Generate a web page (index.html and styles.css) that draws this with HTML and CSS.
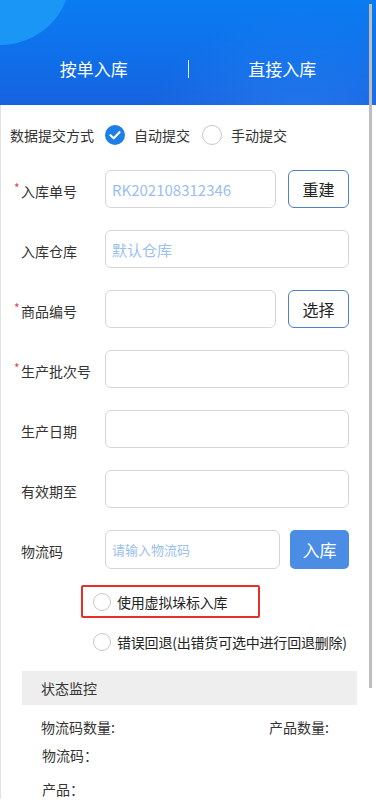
FILE: index.html
```html
<!DOCTYPE html>
<html lang="zh-CN">
<head>
    <meta charset="UTF-8">
    <meta name="viewport" content="width=device-width, initial-scale=1.0">
    <title>入库</title>
    <link rel="stylesheet" href="styles.css">
</head>
<body>
    <div class="header">
        <div class="bubble"></div>
        <div class="wave"></div>
        <div class="tabs">
            <div class="tab">按单入库</div>
            <div class="tab-line"></div>
            <div class="tab">直接入库</div>
        </div>
    </div>

    <div class="page">
        <div class="submit-row">
            <span class="submit-label">数据提交方式</span>
            <span class="radio checked">
                <svg width="20" height="20" viewBox="0 0 20 20">
                    <circle cx="10" cy="10" r="10" fill="#1e7ee8"/>
                    <path d="M5.5 10.2 L8.7 13.2 L14.5 7.2" fill="none" stroke="#fff" stroke-width="2.2" stroke-linecap="round" stroke-linejoin="round"/>
                </svg>
            </span>
            <span class="radio-text">自动提交</span>
            <span class="radio"></span>
            <span class="radio-text">手动提交</span>
        </div>

        <div class="field">
            <label class="label"><i>*</i>入库单号</label>
            <div class="input short"><span class="value">RK202108312346</span></div>
            <button class="btn-outline">重建</button>
        </div>

        <div class="field">
            <label class="label"><i></i>入库仓库</label>
            <div class="input"><span class="value">默认仓库</span></div>
        </div>

        <div class="field">
            <label class="label"><i>*</i>商品编号</label>
            <div class="input short"></div>
            <button class="btn-outline">选择</button>
        </div>

        <div class="field">
            <label class="label"><i>*</i>生产批次号</label>
            <div class="input"></div>
        </div>

        <div class="field">
            <label class="label"><i></i>生产日期</label>
            <div class="input"></div>
        </div>

        <div class="field">
            <label class="label"><i></i>有效期至</label>
            <div class="input"></div>
        </div>

        <div class="field code-field">
            <label class="label"><i></i>物流码</label>
            <div class="input short"><span class="placeholder">请输入物流码</span></div>
            <button class="btn-primary">入库</button>
        </div>

        <div class="option highlight">
            <span class="radio"></span>
            <span class="option-text">使用虚拟垛标入库</span>
        </div>

        <div class="option">
            <span class="radio"></span>
            <span class="option-text">错误回退(出错货可选中进行回退删除)</span>
        </div>

        <div class="monitor">
            <div class="monitor-title">状态监控</div>
            <div class="monitor-counts">
                <span>物流码数量:</span>
                <span>产品数量:</span>
            </div>
            <div class="monitor-line">物流码：</div>
            <div class="monitor-line last">产品：</div>
        </div>
    </div>

    <div class="scrollbar"></div>
</body>
</html>
```

FILE: styles.css
```css
body {
    margin: 0;
    padding: 0;
    font-family: "Noto Sans CJK SC", "Liberation Sans", sans-serif;
    color: #333;
    background: #fff;
    overflow: hidden;
}

.header {
    position: relative;
    height: 105px;
    overflow: hidden;
    background: linear-gradient(180deg, #0b7cf2 0%, #0f6fe9 55%, #1763df 100%);
}

.bubble {
    position: absolute;
    left: -70px;
    top: -90px;
    width: 140px;
    height: 135px;
    border-radius: 50%;
    background: #1a97f6;
}

.wave {
    position: absolute;
    left: 150px;
    top: 10px;
    width: 300px;
    height: 220px;
    border-radius: 50%;
    background: radial-gradient(ellipse at center, rgba(60, 150, 255, 0.35) 0%, rgba(60, 150, 255, 0) 70%);
}

.tabs {
    position: relative;
    display: flex;
    align-items: center;
    padding-top: 57px;
}

.tab {
    flex: 1;
    text-align: center;
    color: #fff;
    font-size: 17px;
    line-height: 24px;
}

.tab-line {
    width: 1px;
    height: 18px;
    background: #e8f1ff;
}

.page {
    border-left: 1px solid #e2e2e2;
    padding: 20px 27px 0 0;
}

.submit-row {
    display: flex;
    align-items: center;
    height: 20px;
    font-size: 14px;
    margin-bottom: 25px;
}

.submit-label {
    padding-left: 9px;
    width: 86px;
    margin-right: 9px;
    white-space: nowrap;
}

.radio {
    display: inline-block;
    box-sizing: border-box;
    width: 20px;
    height: 20px;
    border: 1px solid #c8c8c8;
    border-radius: 50%;
    flex-shrink: 0;
}

.radio.checked {
    border: none;
}

.radio.checked svg {
    display: block;
}

.radio-text {
    margin-left: 9px;
    margin-right: 12px;
}

.field {
    display: flex;
    align-items: center;
    height: 38px;
    margin-bottom: 22px;
}

.label {
    width: 104px;
    flex-shrink: 0;
    padding-left: 13px;
    box-sizing: border-box;
    font-size: 14px;
    white-space: nowrap;
    display: flex;
    align-items: center;
    padding-top: 3px;
}

.label i {
    font-style: normal;
    color: #e0474a;
    width: 7px;
    font-size: 12px;
    align-self: flex-start;
    margin-top: -2px;
}

.input {
    flex: 1;
    height: 38px;
    box-sizing: border-box;
    border: 1px solid #d6d6d6;
    border-radius: 6px;
    display: flex;
    align-items: center;
    padding-left: 6px;
}

.input.short {
    flex: none;
    width: 171px;
}

.value {
    color: #9bc0ee;
    font-size: 15px;
}

.placeholder {
    color: #9bc0ee;
    font-size: 13px;
}

.btn-outline {
    margin-left: auto;
    width: 61px;
    height: 38px;
    border: 1px solid #4f80c9;
    border-radius: 6px;
    background: #fff;
    color: #222;
    font-family: inherit;
    font-size: 16px;
    padding: 0;
}

.code-field {
    height: 39px;
    margin-bottom: 16px;
}

.code-field .input {
    height: 39px;
}

.code-field .input.short {
    width: 175px;
}

.btn-primary {
    margin-left: auto;
    width: 59px;
    height: 39px;
    border: none;
    border-radius: 5px;
    background: #4b8ce4;
    color: #fff;
    font-family: inherit;
    font-size: 17px;
    padding: 0;
}

.option {
    display: flex;
    align-items: center;
    margin-left: 92px;
    margin-right: -27px;
    height: 33px;
    font-size: 14px;
    color: #222;
    margin-top: 7px;
    white-space: nowrap;
}

.option .radio {
    width: 18px;
    height: 18px;
    margin-right: 6px;
}

.option-text {
    letter-spacing: -0.2px;
}

.option.highlight {
    width: 179px;
    box-sizing: border-box;
    margin-left: 80px;
    margin-right: 0;
    margin-top: 0;
    padding-left: 10px;
    border: 2px solid #e8302a;
    border-radius: 2px;
}

.monitor {
    margin: 13px 0 0 21px;
    font-size: 14px;
}

.monitor-title {
    background: #eeeeee;
    height: 34px;
    line-height: 34px;
    padding-left: 19px;
    font-size: 14px;
    width: 335px;
    box-sizing: border-box;
}

.monitor-counts {
    display: flex;
    padding-left: 19px;
    margin-top: 12px;
    line-height: 20px;
}

.monitor-counts span:first-child {
    width: 228px;
}

.monitor-line {
    padding-left: 20px;
    margin-top: 8px;
    line-height: 20px;
}

.monitor-line.last {
    margin-top: 14px;
}

.scrollbar {
    position: fixed;
    right: 4px;
    top: 4px;
    width: 3px;
    height: 684px;
    background: #bdbdbd;
}
```
